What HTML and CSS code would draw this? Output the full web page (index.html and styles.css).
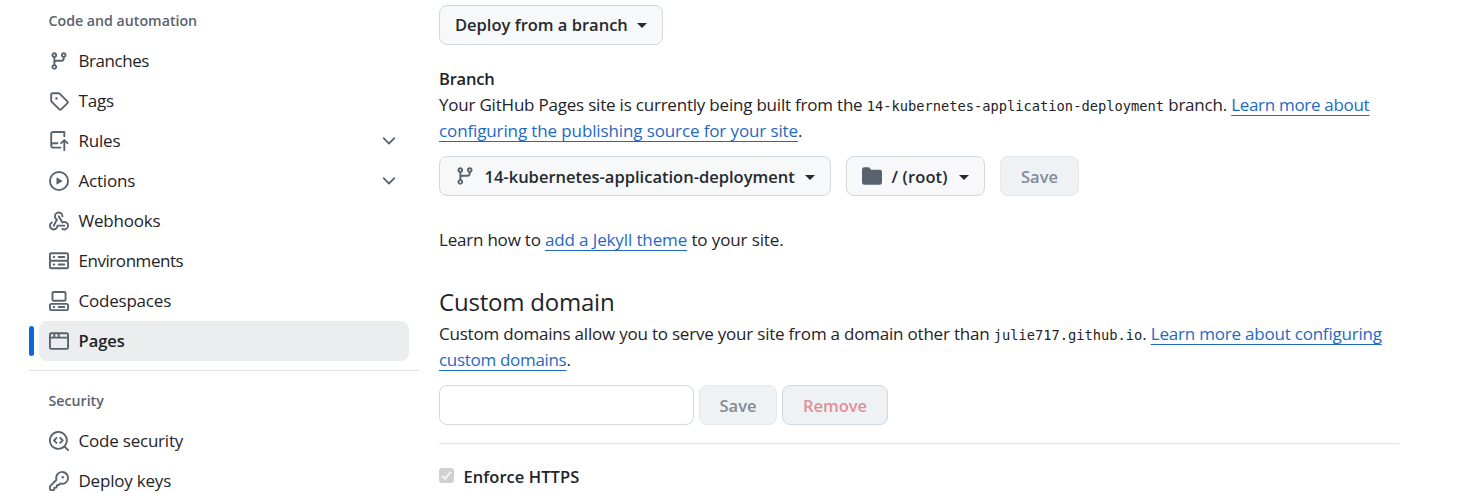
FILE: index.html
```html
<!DOCTYPE html>
<html lang="en">
<head>
<meta charset="utf-8">
<title>Pages settings</title>
<link rel="stylesheet" href="styles.css">
</head>
<body>
<svg class="sprite" width="0" height="0">
<symbol id="branch" viewBox="0 0 16 16"><path d="M9.5 3.25a2.25 2.25 0 1 1 3 2.122V6A2.5 2.5 0 0 1 10 8.5H6a1 1 0 0 0-1 1v1.128a2.251 2.251 0 1 1-1.5 0V5.372a2.25 2.25 0 1 1 1.5 0v1.836A2.493 2.493 0 0 1 6 7h4a1 1 0 0 0 1-1v-.628A2.25 2.25 0 0 1 9.5 3.25Zm-6 0a.75.75 0 1 0 1.5 0 .75.75 0 0 0-1.5 0Zm8.25-.75a.75.75 0 1 0 0 1.5.75.75 0 0 0 0-1.5ZM4.25 12a.75.75 0 1 0 0 1.5.75.75 0 0 0 0-1.5Z"/></symbol>
<symbol id="tag" viewBox="0 0 16 16"><path d="M1 7.775V2.75C1 1.784 1.784 1 2.75 1h5.025c.464 0 .91.184 1.238.513l6.25 6.25a1.75 1.75 0 0 1 0 2.474l-5.026 5.026a1.75 1.75 0 0 1-2.474 0l-6.25-6.25A1.752 1.752 0 0 1 1 7.775Zm1.5 0c0 .066.026.13.073.177l6.25 6.25a.25.25 0 0 0 .354 0l5.025-5.025a.25.25 0 0 0 0-.354l-6.25-6.25a.25.25 0 0 0-.177-.073H2.75a.25.25 0 0 0-.25.25ZM6 5a1 1 0 1 1 0 2 1 1 0 0 1 0-2Z"/></symbol>
<symbol id="rules" viewBox="0 0 16 16"><path d="M1 2.5A2.5 2.5 0 0 1 3.5 0h8.75a.75.75 0 0 1 .75.75v3.5a.75.75 0 0 1-1.5 0V1.5h-8a1 1 0 0 0-1 1v6.708A2.493 2.493 0 0 1 3.5 9h3.25a.75.75 0 0 1 0 1.5H3.5a1 1 0 0 0 0 2h5.75a.75.75 0 0 1 0 1.5H3.5A2.5 2.5 0 0 1 1 11.5Zm13.23 7.79-1.225-1.223v6.184a.75.75 0 0 1-1.5 0V9.066L10.28 10.29a.75.75 0 0 1-1.06-1.061l2.505-2.504a.75.75 0 0 1 1.06 0L15.29 9.23a.751.751 0 0 1-.018 1.042.751.751 0 0 1-1.042.018Z"/></symbol>
<symbol id="play" viewBox="0 0 16 16"><path d="M8 0a8 8 0 1 1 0 16A8 8 0 0 1 8 0ZM1.5 8a6.5 6.5 0 1 0 13 0 6.5 6.5 0 0 0-13 0Zm4.879-2.773 4.264 2.559a.25.25 0 0 1 0 .428l-4.264 2.559A.25.25 0 0 1 6 10.559V5.442a.25.25 0 0 1 .379-.215Z"/></symbol>
<symbol id="webhook" viewBox="0 0 16 16"><path d="M5.5 4.25a2.25 2.25 0 0 1 4.5 0 .75.75 0 0 0 1.5 0 3.75 3.75 0 1 0-6.14 2.889l-2.272 4.258a.75.75 0 0 0 1.324.706L7 7.25a.75.75 0 0 0-.309-1.015A2.25 2.25 0 0 1 5.5 4.25Z"/><path d="M7.364 3.607a.75.75 0 0 1 1.03.257l2.608 4.349a3.75 3.75 0 1 1-.628 6.785.75.75 0 0 1 .752-1.299 2.25 2.25 0 1 0-.033-3.88.75.75 0 0 1-1.03-.256L7.107 4.636a.75.75 0 0 1 .257-1.03Z"/><path d="M2.9 8.776A.75.75 0 0 1 2.625 9.8 2.25 2.25 0 1 0 6 11.75a.75.75 0 0 1 .75-.751h5.5a.75.75 0 0 1 0 1.5H7.425a3.751 3.751 0 1 1-5.55-3.998.75.75 0 0 1 1.024.274Z"/></symbol>
<symbol id="server" viewBox="0 0 16 16"><path d="M1.75 1h12.5c.966 0 1.75.784 1.75 1.75v4c0 .372-.116.717-.314 1 .198.283.314.628.314 1v4a1.75 1.75 0 0 1-1.75 1.75H1.75A1.75 1.75 0 0 1 0 12.75v-4c0-.358.109-.707.314-1a1.739 1.739 0 0 1-.314-1v-4C0 1.784.784 1 1.75 1ZM1.5 2.75v4c0 .138.112.25.25.25h12.5a.25.25 0 0 0 .25-.25v-4a.25.25 0 0 0-.25-.25H1.75a.25.25 0 0 0-.25.25Zm.25 5.75a.25.25 0 0 0-.25.25v4c0 .138.112.25.25.25h12.5a.25.25 0 0 0 .25-.25v-4a.25.25 0 0 0-.25-.25ZM7 4.75A.75.75 0 0 1 7.75 4h4.5a.75.75 0 0 1 0 1.5h-4.5A.75.75 0 0 1 7 4.75ZM7.75 10h4.5a.75.75 0 0 1 0 1.5h-4.5a.75.75 0 0 1 0-1.5ZM3 4.75A.75.75 0 0 1 3.75 4h.5a.75.75 0 0 1 0 1.5h-.5A.75.75 0 0 1 3 4.75ZM3.75 10h.5a.75.75 0 0 1 0 1.5h-.5a.75.75 0 0 1 0-1.5Z"/></symbol>
<symbol id="codespaces" viewBox="0 0 16 16"><path d="M0 11.25c0-.966.784-1.75 1.75-1.75h12.5c.966 0 1.75.784 1.75 1.75v3A1.75 1.75 0 0 1 14.25 16H1.75A1.75 1.75 0 0 1 0 14.25Zm2-9.5C2 .784 2.784 0 3.75 0h8.5C13.216 0 14 .784 14 1.75v5a1.75 1.75 0 0 1-1.75 1.75h-8.5A1.75 1.75 0 0 1 2 6.75Zm1.75-.25a.25.25 0 0 0-.25.25v5c0 .138.112.25.25.25h8.5a.25.25 0 0 0 .25-.25v-5a.25.25 0 0 0-.25-.25Zm-2 9.5a.25.25 0 0 0-.25.25v3c0 .138.112.25.25.25h12.5a.25.25 0 0 0 .25-.25v-3a.25.25 0 0 0-.25-.25Z"/><path d="M7 12.75a.75.75 0 0 1 .75-.75h4.5a.75.75 0 0 1 0 1.5h-4.5a.75.75 0 0 1-.75-.75Zm-4 0a.75.75 0 0 1 .75-.75h.5a.75.75 0 0 1 0 1.5h-.5a.75.75 0 0 1-.75-.75Z"/></symbol>
<symbol id="browser" viewBox="0 0 16 16"><path d="M0 2.75C0 1.784.784 1 1.75 1h12.5c.966 0 1.75.784 1.75 1.75v10.5A1.75 1.75 0 0 1 14.25 15H1.75A1.75 1.75 0 0 1 0 13.25ZM14.5 6h-13v7.25c0 .138.112.25.25.25h12.5a.25.25 0 0 0 .25-.25Zm-6-3.5v2h6V2.75a.25.25 0 0 0-.25-.25ZM5 2.5v2h2v-2Zm-3.25 0a.25.25 0 0 0-.25.25V4.5h2v-2Z"/></symbol>
<symbol id="codescan" viewBox="0 0 16 16"><path d="M8.47 4.97a.75.75 0 0 0 0 1.06L9.94 7.5 8.47 8.97a.75.75 0 1 0 1.06 1.06l2-2a.75.75 0 0 0 0-1.06l-2-2a.75.75 0 0 0-1.06 0ZM6.53 6.03a.75.75 0 0 0-1.06-1.06l-2 2a.75.75 0 0 0 0 1.06l2 2a.75.75 0 1 0 1.06-1.06L5.06 7.5l1.47-1.47Z"/><path d="M12.246 13.307a7.501 7.501 0 1 1 1.06-1.06l2.474 2.473a.749.749 0 1 1-1.06 1.06ZM1.5 7.5a6.002 6.002 0 0 0 3.608 5.504 6.002 6.002 0 0 0 6.486-1.117.748.748 0 0 1 .292-.293A6 6 0 1 0 1.5 7.5Z"/></symbol>
<symbol id="key" viewBox="0 0 16 16"><path d="M10.5 0a5.499 5.499 0 1 1-1.288 10.848l-.932.932a.749.749 0 0 1-.53.22H7v.75a.749.749 0 0 1-.22.53l-.5.5a.749.749 0 0 1-.53.22H5v.75a.749.749 0 0 1-.22.53l-.5.5a.749.749 0 0 1-.53.22h-2A1.75 1.75 0 0 1 0 14.25v-2c0-.199.079-.389.22-.53l4.932-4.932A5.5 5.5 0 0 1 10.5 0Zm-4 5.5c-.001.431.069.86.205 1.269a.75.75 0 0 1-.181.768L1.5 12.56v1.69c0 .138.112.25.25.25h1.69l.06-.06v-1.19a.75.75 0 0 1 .75-.75h1.19l.06-.06v-1.19a.75.75 0 0 1 .75-.75h1.19l1.023-1.025a.75.75 0 0 1 .768-.18A4 4 0 1 0 6.5 5.5ZM11 6a1 1 0 1 1 0-2 1 1 0 0 1 0 2Z"/></symbol>
<symbol id="chevron" viewBox="0 0 16 16"><path d="M12.78 5.22a.749.749 0 0 1 0 1.06l-4.25 4.25a.749.749 0 0 1-1.06 0L3.22 6.28a.749.749 0 1 1 1.06-1.06L8 8.939l3.72-3.719a.749.749 0 0 1 1.06 0Z"/></symbol>
<symbol id="folder" viewBox="0 0 16 16"><path d="M1.75 1A1.75 1.75 0 0 0 0 2.75v10.5C0 14.216.784 15 1.75 15h12.5A1.75 1.75 0 0 0 16 13.25v-8.5A1.75 1.75 0 0 0 14.25 3H7.5a.25.25 0 0 1-.2-.1l-.9-1.2C6.07 1.26 5.55 1 5 1H1.75Z"/></symbol>
</svg>
<div class="page">
<nav class="sidebar">
<h3 class="group-title">Code and automation</h3>
<ul class="nav-list">
<li class="nav-item tight"><svg class="icon"><use href="#branch"/></svg><span>Branches</span></li>
<li class="nav-item"><svg class="icon"><use href="#tag"/></svg><span>Tags</span></li>
<li class="nav-item"><svg class="icon"><use href="#rules"/></svg><span>Rules</span><svg class="icon chevron"><use href="#chevron"/></svg></li>
<li class="nav-item"><svg class="icon"><use href="#play"/></svg><span>Actions</span><svg class="icon chevron"><use href="#chevron"/></svg></li>
<li class="nav-item"><svg class="icon"><use href="#webhook"/></svg><span>Webhooks</span></li>
<li class="nav-item tight"><svg class="icon"><use href="#server"/></svg><span>Environments</span></li>
<li class="nav-item"><svg class="icon"><use href="#codespaces"/></svg><span>Codespaces</span></li>
<li class="nav-item current"><svg class="icon"><use href="#browser"/></svg><span>Pages</span></li>
</ul>
<hr class="divider">
<h3 class="group-title">Security</h3>
<ul class="nav-list">
<li class="nav-item"><svg class="icon"><use href="#codescan"/></svg><span>Code security</span></li>
<li class="nav-item"><svg class="icon"><use href="#key"/></svg><span>Deploy keys</span></li>
</ul>
</nav>
<main class="content">
<button class="btn source"><span>Deploy from a branch</span><i class="caret"></i></button>
<h4 class="label">Branch</h4>
<p class="text">Your GitHub Pages site is currently being built from the <code>14-kubernetes-application-deployment</code> branch. <a class="link"><span class="snug">Learn more about</span><br><span class="loose">configuring the publishing source for your site</span></a>.</p>
<div class="row branch-row">
<button class="btn branch"><svg class="icon"><use href="#branch"/></svg><span>14-kubernetes-application-deployment</span><i class="caret"></i></button>
<button class="btn folder"><svg class="icon"><use href="#folder"/></svg><span>/ (root)</span><i class="caret"></i></button>
<button class="btn save disabled">Save</button>
</div>
<p class="text theme">Learn how to <a class="link loose">add a Jekyll theme</a><span class="loose"> to your site.</span></p>
<h2 class="heading">Custom domain</h2>
<p class="text">Custom domains allow you to serve your site from a domain other than <code>julie717.github.io</code>. <a class="link">Learn more about configuring<br><span class="snug">custom domains</span></a>.</p>
<div class="row domain-row">
<input class="field" type="text">
<button class="btn save disabled">Save</button>
<button class="btn remove">Remove</button>
</div>
<hr class="rule">
<div class="https"><span class="check"><svg viewBox="0 0 15 15"><path d="M3 7.6 6 10.6 12 3.8"/></svg></span><span>Enforce HTTPS</span></div>
</main>
</div>
</body>
</html>
```
FILE: styles.css
```css
* { box-sizing: border-box; }
body {
  margin: 0;
  background: #fff;
  color: #1f2328;
  font: 17px/26px "Open Sans", "Noto Sans", sans-serif;
  letter-spacing: -0.21px;
  overflow: hidden;
}
h2, h3, h4, p, ul { margin: 0; padding: 0; }
.sprite { display: block; position: absolute; }
.page { display: flex; height: 493px; overflow: hidden; }
.icon { width: 20px; height: 20px; fill: #59636e; flex: none; }

.sidebar { width: 390px; margin-left: 29px; flex: none; }
.group-title {
  height: 41px;
  padding-left: 19.5px;
  color: #59636e;
  font-size: 14.2px;
  font-weight: 600;
  line-height: 41px;
  letter-spacing: 0;
}
.nav-list { list-style: none; margin: 0 10px; }
.nav-item {
  position: relative;
  display: flex;
  align-items: center;
  gap: 9.5px;
  height: 40px;
  padding: 0 10px;
  border-radius: 8px;
}
.tight { letter-spacing: -0.45px; }
.chevron { margin-left: auto; }
.current { background: #ecedef; font-size: 16.5px; font-weight: 600; letter-spacing: 0; }
.current::before {
  content: "";
  position: absolute;
  left: -10px;
  top: 5px;
  width: 5px;
  height: 30px;
  border-radius: 5px;
  background: #0969da;
}
.divider { height: 1px; margin: 9px 0; border: 0; background: #dadee2; }

.content { width: 960px; margin-left: 20px; padding-top: 5px; }
.btn {
  display: flex;
  align-items: center;
  height: 40px;
  padding: 0 15px;
  border: 1px solid #d1d9e0;
  border-radius: 8px;
  background: #f6f8fa;
  color: #25292e;
  font: 600 16.5px/26px "Open Sans", "Noto Sans", sans-serif;
  letter-spacing: 0;
  white-space: nowrap;
}
.btn .icon { margin-right: 9.5px; }
.caret { margin-left: auto; border: 5px solid transparent; border-top-color: #25292e; border-bottom: 0; }
.source { width: 224px; }
.label { margin-top: 21px; font-size: 16.5px; font-weight: 600; line-height: 26px; }
.text { white-space: nowrap; }
.snug { letter-spacing: -0.31px; }
.loose { letter-spacing: -0.12px; }
code { font: 13.72px/20px "DejaVu Sans Mono", monospace; letter-spacing: 0; }
.link { color: #1f69c4; text-decoration: underline; text-decoration-thickness: 1px; text-underline-offset: 4px; }
.row { display: flex; }
.branch-row { margin-top: 12px; gap: 15px; }
.branch-row .btn { padding-top: 2px; }
.branch-row .btn .icon { margin-top: -2px; }
.branch { width: 392px; }
.folder { width: 139px; letter-spacing: 0.15px; }
.save { width: 79px; justify-content: center; }
.disabled { border-color: #e4e8ec; background: #eff2f5; color: #818b98; }
.theme { margin-top: 31px; }
.heading { margin-top: 30px; margin-bottom: 1px; font-size: 24px; font-weight: 400; line-height: 37px; }
.domain-row { margin-top: 12px; gap: 5px; }
.field { width: 255px; height: 40px; border: 1px solid #d1d9e0; border-radius: 8px; background: #fff; }
.domain-row .btn { padding-top: 2px; }
.domain-row .save { width: 78px; }
.remove { width: 106px; justify-content: center; background: #eff2f5; color: #df8f95; }
.rule { height: 1px; margin: 18px 0 20px; border: 0; background: #dfe3e7; }
.https { display: flex; align-items: center; gap: 9.5px; font-size: 16.5px; font-weight: 600; letter-spacing: 0.05px; }
.check { width: 15px; height: 15px; margin-bottom: 3px; border-radius: 3px; background: #d0d0d0; }
.check svg { display: block; width: 15px; height: 15px; fill: none; stroke: #f5f5f5; stroke-width: 2; }
```
